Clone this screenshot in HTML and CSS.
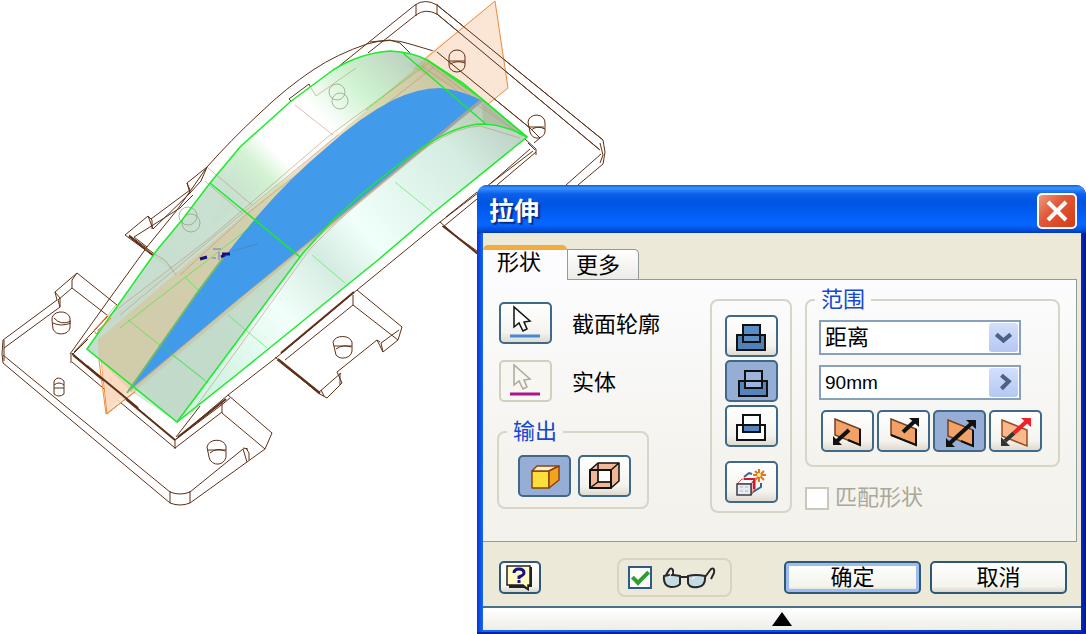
FILE: index.html
```html
<!DOCTYPE html>
<html lang="zh-CN">

<head>
    <meta charset="UTF-8">
    <meta name="viewport" content="width=device-width, initial-scale=1.0">
    <title>拉伸</title>
    <link rel="stylesheet" href="styles.css">
</head>

<body>

    <svg class="model" width="620" height="520" viewBox="0 0 620 520" aria-hidden="true">
        <defs>
            <linearGradient id="side" gradientUnits="userSpaceOnUse" x1="150" y1="340" x2="430" y2="60">
                <stop offset="0" stop-color="#c3dacb"/>
                <stop offset="0.4" stop-color="#c7e0cf"/>
                <stop offset="0.5" stop-color="#d2f2d2"/>
                <stop offset="0.56" stop-color="#ffffff"/>
                <stop offset="0.7" stop-color="#ffffff"/>
                <stop offset="0.83" stop-color="#cdf2cf"/>
                <stop offset="1" stop-color="#b9c9bb"/>
            </linearGradient>
            <linearGradient id="front" gradientUnits="userSpaceOnUse" x1="220" y1="390" x2="510" y2="130">
                <stop offset="0" stop-color="#d3f3e3"/>
                <stop offset="0.25" stop-color="#f2fffa"/>
                <stop offset="0.42" stop-color="#d5ece2"/>
                <stop offset="0.55" stop-color="#f0fffa"/>
                <stop offset="0.85" stop-color="#d5ede2"/>
                <stop offset="1" stop-color="#c0d4c8"/>
            </linearGradient>
        </defs>

        <!-- part, hidden edges first -->
        <g class="edge">
            <path d="M333 71L415 5Q425 -2 437 5L603 140M368 53L416 15Q425 8 437 14L600 150M416 4V16M437 4V15"/>
            <path d="M603 140L605 152L603 164M600 143L603 155L600 163M601 154L566 185M603 164L578 185"/>
            <path d="M70 354L110 298L147 247L177 210L207 167Q230 141 260 113Q286 88 313 70Q337 54 367 44Q390 37 410 44L437 52L530 128"/>
            <path d="M370 42L390 40L400 43L412 55"/>
            <path d="M72 353L175 440M72 362L175 448M71 353V363M175 439V449M72 355L88 339M74 352L108 316"/>
            <path d="M175 440L228 395L277 357L357 290L440 222L533 151M176 437L200 406M175 448L222 412"/>
            <path d="M443 227L477 199M446 217L477 192M497 185L536 152M490 184L530 149M530 128L540 138L534 143M525 139L536 149V155M528 143L535 150"/>
            <path d="M440 222L477 254M442 226L477 251"/>
            <path d="M289 99L309 84L311 88M289 99L292 102"/>
            <!-- left foot of the base plate -->
            <path d="M117 305L77 273L55 292L57 300L3 340L2 354L3 363L170 503Q180 507 190 503L247 462L243 449L190 492Q180 496 170 492L3 355"/>
            <path d="M77 273L72 280V288L107 315M72 288L58 300L60 307L4 348M55 292L60 298V307M170 491V503M190 491V503M4 340V361"/>
            <path d="M228 395L272 433L265 449L247 462M222 403V413L265 449M230 398L224 403L175 440M246 448L249 453V460M243 448L248 449"/>
            <!-- bracket on the left side -->
            <path d="M207 167L187 183L190 193L153 229L148 216L125 235L155 257L180 275M187 183L190 190L151 219M193 195L180 208L134 237L147 247M129 235L180 273M207 167L201 181L190 193M148 216L152 220V229"/>
            <!-- bracket on the right side -->
            <path d="M357 290L402 327L398 340L383 352L377 340L337 372L342 383L327 398L318 393L275 357M353 295V305L398 340M353 305L285 360M277 360L320 394M399 330L381 343L383 352M340 373V385M318 393L341 373M321 390L324 396M377 340L380 342"/>
        </g>
        <path class="edge heavy" d="M73 355L175 440M129 236L154 256M278 359L320 393M443 226L477 253M178 437L226 399M281 353L354 292"/>

        <!-- drilled holes -->
        <g class="edge">
            <path d="M52 320a9 7 0 0 1 18 -2v10a9 8 0 0 1 -17 1zM53 323q8 4 18 0M54 318q7 8 17 3"/>
            <path d="M54 381q4 -6 10 0v13q-5 4 -10 0zM54 388h10M54 385q5 -4 10 0"/>
            <path d="M207 447a10 9 0 0 1 19 -1v8a8 8 0 0 1 -17 3zM207 450h19M210 453q7 -6 15 -2"/>
            <path d="M333 342a10 8 0 0 1 19 0v9a9 8 0 0 1 -16 4zM334 346h18M336 349q7 -5 15 -2"/>
        </g>

        <!-- work plane outside the body -->
        <path d="M495 1L508 88L107 414L98 330L427 55Z" fill="#fae1cd" fill-opacity="0.85"/>
        <path d="M98 330L495 1L508 88L107 414Z" class="plane-line"/>
        <g class="edge">
            <path d="M449 57a8 7 0 0 1 16 0v8a8 7 0 0 1 -16 0zM449 61h16M450 64q7 -4 15 -1"/>
            <path d="M528 122a8 7 0 0 1 17 1v6a7 7 0 0 1 -15 3zM529 127h15M531 130q6 -5 14 -1M437 52L530 128M437 5L603 140M437 14L600 150"/>
        </g>

        <!-- previewed surface -->
        <path d="M87 349L157 250L182 220L210 183L240 147L290 102L333 70Q360 53 390 51Q412 52 427 60L463 83L527 137L177 422Z" fill="url(#side)" fill-opacity="0.94"/>
        <path d="M177 422L303 253L333 220Q374 181 423 147Q458 124 483 124Q506 125 527 137L433 213L378 260L240 372Z" fill="url(#front)"/>
        <path d="M427 60L463 83L527 137Q506 125 483 122L482 100L405 65Z" fill="#a7b598" fill-opacity="0.6"/>
        <path d="M98 340L427 58L482 98L130 391L99 360Z" fill="#dcbd8a" fill-opacity="0.5"/>
        <path d="M288 105L333 70Q360 53 390 51L423 60L280 180L210 225L240 147Z" fill="url(#side)" fill-opacity="0.85"/>
        <g class="faint-edge">
            <path d="M107 317L210 238L330 135L430 62M120 315L215 236L338 135M180 275L248 213L436 65M295 105L333 135M207 167L252 205M205 181L242 213M356 68L316 96L311 88M176 275L165 260L145 249"/>
            <path d="M190 415L310 249Q375 183 430 145Q457 127 480 126L520 138M135 390L300 252M107 316L116 305M430 65L520 134M422 66L522 136"/>
        </g>
        <g class="hidden-hole">
            <circle cx="337" cy="92" r="8"/><circle cx="340" cy="101" r="8"/>
            <circle cx="188" cy="216" r="9"/><circle cx="191" cy="223" r="9"/>
        </g>

        <!-- selected profile -->
        <path d="M127 393L197 293Q230 248 260 213Q290 178 327 147Q360 117 393 100Q418 88 440 88Q462 90 483 101L312 240L240 298Z" fill="#429aeb"/>
        <path d="M482 100L130 391" stroke="#cda978" stroke-width="3" stroke-opacity="0.65"/>
        <path d="M127 393L197 293L226 254" fill="none" stroke="#73b96d" stroke-width="2"/>
        <path d="M177 422L303 253Q306 248 312 241L240 299L130 391Z" fill="#bfd8c7" fill-opacity="0.55"/>

        <g class="green">
            <path d="M87 349L157 250L182 220L210 183L240 147L290 102L333 70Q360 53 390 51Q412 52 427 60L463 83L527 137L433 213L378 260L240 372L177 422Z"/>
            <path d="M177 422L303 253L333 220Q374 181 423 147Q458 124 483 124Q506 125 527 137"/>
            <path d="M403 53L487 125M210 183L300 257M427 60L482 99L527 137"/>
        </g>
        <g class="green thin">
            <path d="M395 182L433 213M312 255L345 283M228 315L267 348M128 320L208 383M185 277L202 294M262 218L120 328M173 355L205 380M425 63L366 110"/>
        </g>
        <path d="M107 316L94 330L96 334L111 318M99 360L106 414L135 392" class="plane-line"/>
        <path d="M101 362L128 390L108 410Z" fill="#fad8bd" fill-opacity="0.8"/>
        <path class="edge heavy" d="M98 375L138 408M87 366L104 380"/>

        <!-- origin marker -->
        <path d="M200 259L207 257M222 254H230M221 257L225 255" stroke="#17107c" stroke-width="3"/>
        <path d="M213 249H221M219 252V260M212 258H216" stroke="#a49bc4" stroke-width="2"/>
        <path d="M232 251L258 244" stroke="#4c87c2"/>
    </svg>

    <form class="dialog">
        <header class="title-bar">
            <h1>拉伸</h1>
            <button type="button" class="close" aria-label="关闭">
                <svg width="24" height="22" viewBox="0 0 24 22"><path d="M3 2L21 20M21 2L3 20" stroke="#fff" stroke-width="4"/></svg>
            </button>
        </header>

        <div class="client">
            <nav class="tabs">
                <button type="button" class="tab active">形状</button>
                <button type="button" class="tab">更多</button>
            </nav>

            <div class="panel">
                <div class="selection">
                    <div class="pick">
                        <button type="button" class="tool" id="profile" aria-label="截面轮廓">
                            <svg viewBox="2 2 49 38">
                                <path d="M15 5V25L20 21L24 29L28 27L25 20L31 19Z" fill="#fff" stroke="#111" stroke-width="1.5"/>
                                <path d="M11 34H41" stroke="#438bd8" stroke-width="3"/>
                            </svg>
                        </button>
                        <label for="profile">截面轮廓</label>
                    </div>
                    <div class="pick">
                        <button type="button" class="tool off" id="solid" aria-label="实体">
                            <svg viewBox="2 2 49 38">
                                <path d="M15 5V25L20 21L24 29L28 27L25 20L31 19Z" fill="#f7f6f0" stroke="#aaa99c" stroke-width="1.5"/>
                                <path d="M11 34H41" stroke="#aa158d" stroke-width="3"/>
                            </svg>
                        </button>
                        <label for="solid">实体</label>
                    </div>

                    <fieldset class="group output">
                        <legend>输出</legend>
                        <div class="tools">
                            <button type="button" class="tool pressed" aria-label="输出实体">
                                <svg viewBox="2 2 49 38" stroke="#8a430b" stroke-width="1.5" stroke-linejoin="round">
                                    <path d="M14 16H31V33H14Z" fill="#fddf3c"/>
                                    <path d="M14 16L19 11H41L31 16Z" fill="#fff0cf"/>
                                    <path d="M31 16L41 11V25L31 33Z" fill="#f2a51c"/>
                                </svg>
                            </button>
                            <button type="button" class="tool" aria-label="输出曲面">
                                <svg viewBox="2 2 49 38" stroke="#111" stroke-width="1.5" stroke-linejoin="round">
                                    <path d="M12 15L20 8H41V26L33 33H12Z" fill="#efb795"/>
                                    <path d="M20 15H33V27H20Z" fill="#fff" stroke="#5d4437" stroke-width="1"/>
                                    <path d="M33 15L41 8M20 8V27L12 33M20 27H33" fill="none"/>
                                    <path d="M12 15H33V33H12Z" fill="none" stroke-width="2"/>
                                </svg>
                            </button>
                        </div>
                    </fieldset>
                </div>

                <div class="group operations">
                    <button type="button" class="tool" aria-label="求并">
                        <svg viewBox="2 2 49 38" stroke="#111" stroke-width="2">
                            <path d="M12 20H40V35H12Z" fill="#4e81b8"/>
                            <path d="M18 10H35V27H18Z" fill="#5a8dc4"/>
                            <path d="M18 20H35"/>
                        </svg>
                    </button>
                    <button type="button" class="tool pressed" aria-label="求差">
                        <svg viewBox="2 2 49 38" stroke="#111" stroke-width="2">
                            <path d="M14 21H42V36H14Z" fill="#5585bb"/>
                            <path d="M20 11H37V28H20Z" fill="#9db5dc"/>
                            <path d="M20 21H37"/>
                        </svg>
                    </button>
                    <button type="button" class="tool" aria-label="求交">
                        <svg viewBox="2 2 49 38" stroke="#111" stroke-width="2">
                            <path d="M12 20H40V35H12ZM18 10H35V27H18Z" fill="#fff"/>
                            <path d="M18 20H35V27H18Z" fill="#5585bb"/>
                        </svg>
                    </button>
                    <button type="button" class="tool separate" aria-label="新建实体">
                        <svg viewBox="2 2 49 38" fill="none">
                            <path d="M12 23L17 18H30L26 23Z" fill="#fff" stroke="#d64c4c"/>
                            <path d="M26 23L30 18V29L26 34Z" fill="#f3b4b4" stroke="#a03038"/>
                            <path d="M12 23H26V34H12Z" fill="#e9edf3" stroke="#3c3c46" stroke-width="1.5"/>
                            <path d="M15 26H18M20 26H23M15 30H18M20 30H23" stroke="#a9b4c4"/>
                            <path d="M19 16L24 12L27 13M28 31L36 26V22" stroke="#39648d" stroke-width="2"/>
                            <path d="M19 18H29V28" stroke="#d41725" stroke-width="2"/>
                            <path d="M34 8V21M28 14H41M30 10L39 19M39 10L30 19" stroke="#e87412" stroke-width="2"/>
                            <circle cx="34" cy="14" r="2" fill="#ffe79b"/>
                        </svg>
                    </button>
                </div>

                <div class="extent">
                    <fieldset class="group">
                        <legend>范围</legend>
                        <div class="field">
                            <select aria-label="范围">
                                <option>距离</option>
                            </select>
                            <svg class="arrow" viewBox="0 0 28 28"><path d="M7 11L14 17L21 11" fill="none" stroke="#4d6185" stroke-width="4"/></svg>
                        </div>
                        <div class="field">
                            <input type="text" value="90mm" aria-label="距离">
                            <svg class="arrow" viewBox="0 0 28 28"><path d="M12 7L19 13L12 20" fill="none" stroke="#4d6185" stroke-width="4"/></svg>
                        </div>
                        <div class="tools">
                            <button type="button" class="tool" aria-label="方向 1">
                                <svg viewBox="2 2 49 38">
                                    <path d="M14 9L39 19V35L14 25Z" fill="#f0a268" stroke="#77411f" stroke-width="1.5"/>
                                    <path d="M39 19V35L27 30" fill="none" stroke="#111" stroke-width="2"/>
                                    <path d="M28 20L16 31" stroke="#111" stroke-width="4"/><path d="M12 26V35H21Z" fill="#111"/>
                                </svg>
                            </button>
                            <button type="button" class="tool" aria-label="方向 2">
                                <svg viewBox="2 2 49 38">
                                    <path d="M14 9L39 19V35L14 25Z" fill="#f0a268" stroke="#77411f" stroke-width="1.5"/>
                                    <path d="M14 25L39 35V19" fill="none" stroke="#111" stroke-width="2"/>
                                    <path d="M26 22L38 11" stroke="#111" stroke-width="4"/><path d="M32 8H42V17Z" fill="#111"/>
                                </svg>
                            </button>
                            <button type="button" class="tool pressed" aria-label="对称">
                                <svg viewBox="2 2 49 38">
                                    <path d="M15 10L40 20V36L15 26Z" fill="#f0a268" stroke="#77411f" stroke-width="1.5"/>
                                    <path d="M40 20V36L28 31" fill="none" stroke="#111" stroke-width="2"/>
                                    <path d="M17 33L39 13" stroke="#111" stroke-width="4"/><path d="M33 10H43V19ZM13 28V37H22Z" fill="#111"/>
                                </svg>
                            </button>
                            <button type="button" class="tool" aria-label="不对称">
                                <svg viewBox="2 2 49 38">
                                    <path d="M13 10L38 20V36L13 26Z" fill="#f8b98d" stroke="#984d24" stroke-width="1.5"/>
                                    <path d="M25 23L16 31" stroke="#333" stroke-width="4"/><path d="M12 27V36H21Z" fill="#333"/>
                                    <path d="M25 23L38 11" stroke="#ee2028" stroke-width="4"/><path d="M32 8H42V17Z" fill="#ee2028"/>
                                </svg>
                            </button>
                        </div>
                    </fieldset>
                    <label class="match"><input type="checkbox" disabled>匹配形状</label>
                </div>
            </div>

            <div class="actions">
                <button type="button" class="push help" aria-label="帮助">
                    <svg width="38" height="28" viewBox="2 2 38 28">
                        <path d="M10 5H33V25H30V29L25 26H10Z" fill="#222"/>
                        <path d="M8 4H31V23H29V27L24 23H8Z" fill="#fffbc2" stroke="#222" stroke-width="1.5"/>
                        <path d="M15 11Q15 7 20 7Q25 7 25 11Q25 13 20 15V17M20 18V21" fill="none" stroke="#18138a" stroke-width="3"/>
                    </svg>
                </button>
                <label class="preview">
                    <input type="checkbox" checked aria-label="预览">
                    <svg width="54" height="24" viewBox="0 0 54 24" fill="none" stroke="#26282c" stroke-width="2">
                        <path d="M2 10Q9 8 18 10V18Q16 21 9 21Q1 20 2 10ZM26 10Q34 8 43 10Q44 20 36 21Q27 22 26 17Z" fill="#c5dce5"/>
                        <path d="M18 11H26M4 9L7 4Q9 1 11 4V9M43 11L49 3Q53 1 52 7L49 13"/>
                        <path d="M7 12L10 6M30 13L33 11" stroke="#fff" stroke-width="1"/>
                    </svg>
                </label>
                <button type="submit" class="push wide default">确定</button>
                <button type="button" class="push wide">取消</button>
            </div>
        </div>

        <button type="button" class="fold" aria-label="折叠">
            <svg width="22" height="16" viewBox="0 0 22 16"><path d="M11 1L21 15H1Z" fill="#000"/></svg>
        </button>
    </form>

</body>

</html>
```
FILE: styles.css
```css
* {
    box-sizing: border-box;
}

body {
    margin: 0;
    min-height: 100vh;
    position: relative;
    overflow: hidden;
    background-color: #fff;
    font-family: "Liberation Sans", "Noto Sans CJK SC", sans-serif;
    font-size: 22px;
    line-height: 24px;
    color: #000;
}

button,
input,
select {
    font: inherit;
    color: inherit;
    margin: 0;
    padding: 0;
}

svg {
    display: block;
}

/* model view */
.model .edge {
    fill: none;
    stroke: #5e3018;
    stroke-width: 1;
}

.model .heavy {
    stroke-width: 2;
}

.model .faint-edge {
    fill: none;
    stroke: #b9967c;
    stroke-opacity: 0.6;
}

.model .hidden-hole {
    fill: none;
    stroke: #8b9a78;
    stroke-opacity: 0.7;
}

.model .plane-line {
    fill: none;
    stroke: #ee8a3a;
}

.model .green {
    fill: none;
    stroke: #1aec28;
    stroke-width: 1.5;
}

.model .thin {
    stroke-width: 1;
    stroke-opacity: 0.5;
}

/* dialog window */
.dialog {
    position: absolute;
    top: 185px;
    left: 477px;
    right: 0;
    display: flex;
    flex-direction: column;
    padding: 0 5px 2px 6px;
    background: linear-gradient(to right, #0831d9, #166aee 6px, #0a52e0 50%, #0a2bbd calc(100% - 5px), #001590);
    border-bottom: 3px solid #0622a8;
    border-radius: 10px 10px 0 0;
}

.title-bar {
    display: flex;
    align-items: center;
    justify-content: space-between;
    height: 48px;
    margin: 0 -5px 0 -6px;
    padding: 4px 9px 0 12px;
    border-radius: 10px 10px 0 0;
    background: linear-gradient(#0a5fe0, #3a93ff 3px, #0c5fe8 9px, #0054e3 18px, #0462fb 34px, #0666ff 40px, #0049d0 46px, #0038b0);
}

.title-bar h1 {
    margin: 0;
    color: #fff;
    font-size: 25px;
    font-weight: bold;
    text-shadow: 2px 2px 1px #0a2a86;
}

.close {
    display: grid;
    place-items: center;
    width: 40px;
    height: 36px;
    border: 2px solid #fff;
    border-radius: 5px;
    background: linear-gradient(135deg, #ee9a80, #e2593a 40%, #d53c12);
}

.client {
    background-color: #ece9d8;
}

.tabs {
    display: flex;
    align-items: flex-end;
    height: 46px;
}

.tab {
    height: 30px;
    padding: 2px 18px 0 8px;
    border: 1px solid #919b9c;
    border-bottom: none;
    border-radius: 0 5px 0 0;
    background: linear-gradient(#fff, #ecebe6);
}

.tab.active {
    position: relative;
    height: 35px;
    padding: 0 26px 5px 14px;
    border: none;
    border-top: 5px solid #f0ad3e;
    border-radius: 5px 5px 0 0;
    background: #fcfcfe;
    margin-bottom: -1px;
}

.panel {
    display: flex;
    align-items: flex-start;
    margin-right: 4px;
    padding: 8px 16px 28px 14px;
    border: 1px solid #919b9c;
    border-left: none;
    background: linear-gradient(#fcfcfe, #f4f3ee 70%, #f3f2ec);
}

.selection {
    flex: 1;
    padding-top: 14px;
}

.pick {
    display: flex;
    align-items: center;
    gap: 20px;
    margin-bottom: 16px;
    padding-left: 2px;
}

.pick label {
    padding-top: 3px;
}

.group {
    margin: 0;
    padding: 0;
    border: 2px solid #d7d5c8;
    border-radius: 8px;
}

legend {
    margin-left: 8px;
    padding: 0 6px;
    color: #1447d2;
}

.output {
    width: 152px;
    margin-top: 18px;
    padding: 11px 0 10px;
}

.output .tools {
    margin-left: 19px;
}

.tools {
    display: flex;
    gap: 7px;
}

.tool {
    flex: none;
    width: 53px;
    height: 42px;
    border: 2px solid #3f6889;
    border-radius: 5px;
    background: linear-gradient(#fff, #f4f3ee 75%, #dedbd0);
}

.tool svg {
    width: 49px;
    height: 38px;
}

.tool.pressed {
    background: #96add5;
}

.tool.off {
    border-color: #d2cfbf;
    background: #f7f6f0;
}

.operations {
    display: flex;
    flex-direction: column;
    gap: 3px;
    margin: 11px 13px 0 20px;
    padding: 14px 12px 8px 13px;
}

.separate {
    margin-top: 11px;
}

.extent .group {
    width: 255px;
    padding: 8px 0 13px;
}

.field {
    position: relative;
    width: 202px;
    margin: 0 0 10px 12px;
}

.field select,
.field input {
    display: block;
    appearance: none;
    width: 100%;
    height: 35px;
    padding: 0 36px 0 4px;
    border: 2px solid #87a0bb;
    border-radius: 0;
    background: #fff;
}

.field input {
    font-size: 19px;
}

.arrow {
    position: absolute;
    top: 3px;
    right: 3px;
    width: 29px;
    height: 29px;
    border-radius: 3px;
    background: linear-gradient(#d3dffc, #b5c7f3);
    pointer-events: none;
}

.extent .tools {
    gap: 3px;
    margin-left: 14px;
}

input[type="checkbox"] {
    appearance: none;
    flex: none;
    width: 24px;
    height: 23px;
    border: 2px solid #cac8bb;
    background: #fff;
}

.match {
    display: flex;
    align-items: center;
    gap: 6px;
    margin-top: 19px;
    color: #aaa899;
}

.actions {
    display: flex;
    align-items: center;
    height: 66px;
    padding: 7px 14px 0 16px;
    gap: 9px;
    border-bottom: 2px solid #4c6f88;
}

.push {
    height: 33px;
    border: 2px solid #2d5876;
    border-radius: 5px;
    background: linear-gradient(#fff, #f4f3ee 80%, #dad6c9);
}

.help {
    width: 42px;
}

.wide {
    width: 137px;
}

.default {
    box-shadow: inset 0 0 0 3px #9dbcf0;
}

.preview {
    display: flex;
    align-items: center;
    gap: 10px;
    height: 39px;
    margin: 0 43px 0 auto;
    padding: 0 14px 0 9px;
    border: 2px solid #d7d5c2;
    border-radius: 8px;
}

.preview input:checked {
    border-color: #2c5b84;
    background: #fff;
    display: grid;
    place-items: center;
}

.preview input:checked::before {
    content: "";
    width: 13px;
    height: 6px;
    border-left: 4px solid #2f9e30;
    border-bottom: 4px solid #2f9e30;
    transform: translateY(-2px) rotate(-45deg);
}

.fold {
    display: grid;
    place-items: center;
    height: 22px;
    border: none;
    background: linear-gradient(#fff, #eeede6);
}
```
